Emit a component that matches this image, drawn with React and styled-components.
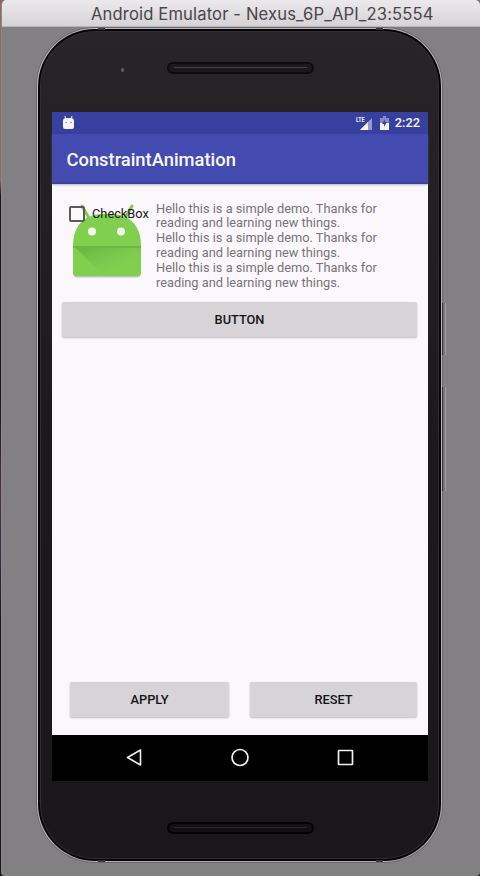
import React from "react";
import styled, { createGlobalStyle } from "styled-components";

const GlobalStyle = createGlobalStyle`
  * { box-sizing: border-box; }
  body { margin: 0; background: #29272b; overflow: hidden; }
`;

const Desktop = styled.div`
  width: 480px;
  height: 876px;
  padding-left: 1px;
  background: linear-gradient(#8f6764 0 180px, #171719 195px 400px, #49313a 490px, #303246 550px, #17171a 620px);
  font-family: Roboto, sans-serif;
`;

const EmulatorWindow = styled.main`
  height: 876px;
  display: flex;
  flex-direction: column;
  border-left: 1px solid #8b898b;
  border-radius: 5px 5px 4px 4px;
  background: #828082;
  overflow: hidden;
`;

const TitleBar = styled.header`
  height: 27px;
  flex: none;
  padding-left: 89px;
  background: linear-gradient(#ebe9eb, #d5d3d5);
  border-bottom: 1px solid #b7b5b7;
  color: #484648;
  font: 400 16.6px/28px Inter, sans-serif;
  letter-spacing: 0.14px;
  white-space: nowrap;
`;

const Phone = styled.section`
  position: relative;
  width: 405px;
  height: 834px;
  margin: 1px 0 0 35px;
  padding: 0 12px 0 14px;
  display: flex;
  flex-direction: column;
  flex: none;
  border: 1px solid;
  border-color: #b5b3b5 #b5b3b5 #aaa8aa #bfbdbf;
  border-radius: 58px;
  background: linear-gradient(#272528, #1c1a1d 45%, #19171a);
  box-shadow: inset 0 0 0 2px #050505, inset 0 0 0 3px #302e32, 0 0 0 1px #6b696b;
`;

const Bezel = styled.div`
  height: ${(p) => p.$height}px;
  flex: none;
  display: flex;
  justify-content: center;
  align-items: flex-start;
  padding-top: ${(p) => p.$top}px;
`;

const Speaker = styled.div`
  width: 147px;
  height: 12px;
  padding: 3px 5px;
  border: 2px solid ${(p) => (p.$dark ? "#020202" : "#0c0b0d")};
  border-radius: 6px;
  background: ${(p) => (p.$dark ? "#111012" : "#1b191c")};
  &::before {
    content: "";
    display: block;
    height: 1px;
    background: ${(p) => (p.$dark ? "#29272b" : "#454346")};
  }
`;

const Camera = styled.span`
  position: absolute;
  left: 83px;
  top: 39px;
  width: 3px;
  height: 4px;
  border-radius: 50%;
  background: #5e6267;
`;

const SideKey = styled.span`
  position: absolute;
  right: -5px;
  top: ${(p) => p.$top}px;
  width: 4px;
  height: ${(p) => p.$height}px;
  border-left: 1px solid #3b393c;
  border-right: 1px solid #a3a1a3;
  background: #777577;
`;

const BandMark = styled.span`
  position: absolute;
  left: ${(p) => p.$left}px;
  ${(p) => (p.$bottom ? "bottom: -1px;" : "top: -1px;")}
  width: 7px;
  height: 2px;
  background: #39373a;
`;

const Screen = styled.div`
  width: 376px;
  height: 669px;
  flex: none;
  display: flex;
  flex-direction: column;
  background: #fbf8fc;
`;

const StatusBar = styled.div`
  height: 22px;
  padding: 0 8px 0 10px;
  display: flex;
  align-items: center;
  background: #373f9f;
  color: #f4f5ff;
`;

const StatusIcons = styled.div`
  margin-left: auto;
  display: flex;
  align-items: center;
  gap: 7px;
`;

const Clock = styled.time`
  font: 500 12.8px/22px Roboto, sans-serif;
  margin-left: -1px;
`;

const AppBar = styled.div`
  height: 50px;
  padding: 0 14.5px;
  flex: none;
  position: relative;
  background: #434bb1;
  box-shadow: inset 0 -2px #3a42a2, 0 1px 2px #77738a88;
  color: #f9f8ff;
  font: 500 18.35px/51px Roboto, sans-serif;
`;

const Content = styled.div`
  flex: 1;
  padding: 17px 11px 18px 10px;
  display: flex;
  flex-direction: column;
`;

const Demo = styled.div`
  display: flex;
  height: 101px;
`;

const Avatar = styled.div`
  position: relative;
  width: 94px;
  flex: none;
  padding: 4px 0 0 10px;
`;

const CheckOverlay = styled.label`
  position: absolute;
  left: 7px;
  top: 4px;
  display: flex;
  align-items: center;
  gap: 7px;
  color: #171518;
  font: 400 12.8px/18px Roboto, sans-serif;
`;

const Box = styled.span`
  width: 16px;
  height: 16px;
  border: 2px solid #5c595d;
  border-radius: 2px;
`;

const Copy = styled.p`
  margin: 0;
  padding-top: 0.6px;
  color: #777478;
  font: 400 12.8px/14.85px Roboto, sans-serif;
`;

const Button = styled.button`
  height: 35px;
  width: ${(p) => p.$width}px;
  flex: none;
  padding: 0;
  border: 0;
  border-radius: 2px;
  background: #d6d4d6;
  box-shadow: 0 1px 2px #6f6d7070;
  color: #171518;
  font: 500 12.8px/35px Roboto, sans-serif;
`;

const Actions = styled.div`
  margin-top: auto;
  padding-left: 8px;
  display: flex;
  justify-content: space-between;
`;

const NavBar = styled.nav`
  height: 46px;
  padding: 0 72px;
  flex: none;
  display: flex;
  align-items: center;
  justify-content: space-between;
  background: #000;
`;

const Icon = styled.svg`
  display: block;
  flex: none;
  overflow: visible;
`;

const SignalLabel = styled.text`
  font: 700 7.5px Roboto, sans-serif;
  fill: #eeefff;
`;

function NotificationBot() {
  return (
    <Icon width="13" height="14" viewBox="0 0 13 14">
      <path d="M3 0l1 4M10 0L9 4" stroke="#f4f5ff" />
      <path d="M1 5q0-3 3-3h5q3 0 3 3v6q0 2-2 2H3q-2 0-2-2z" fill="#f4f5ff" />
      <circle cx="4" cy="6.5" r=".8" fill="#7b80c0" />
      <circle cx="9" cy="6.5" r=".8" fill="#7b80c0" />
    </Icon>
  );
}

function Signal() {
  return (
    <Icon width="17" height="15" viewBox="0 0 17 15">
      <path d="M4 14L16 2v12z" fill="#9499d2" />
      <path d="M4 14l8-8v8z" fill="#f4f5ff" />
      <SignalLabel x="0" y="6" textLength="8.5" lengthAdjust="spacingAndGlyphs">LTE</SignalLabel>
    </Icon>
  );
}

function Battery() {
  return (
    <Icon width="9" height="14" viewBox="0 0 9 14">
      <path d="M3 0h3v2h3v12H0V2h3z" fill="#858bca" />
      <path d="M0 7h9v7H0z" fill="#f4f5ff" />
      <path d="M5 3L2 8h2v3l3-5H5z" fill="#3c449f" />
    </Icon>
  );
}

function LauncherBot() {
  return (
    <Icon width="70" height="72" viewBox="0 0 70 72">
      <defs>
        <linearGradient id="bot-shadow" x1="0" y1="0" x2="1" y2="1">
          <stop offset="0" stopColor="#5ea63c" stopOpacity=".7" />
          <stop offset=".65" stopColor="#6db748" stopOpacity="0" />
        </linearGradient>
      </defs>
      <path d="M1 40h68v28q0 4.5-4 4.5H5q-4 0-4-4.5z" fill="#898b86" opacity=".5" />
      <path d="M10 1l7 12M60 1l-7 12" stroke="#83c954" strokeWidth="3" strokeLinecap="round" />
      <path d="M1 41q0-28 26-32h16q26 4 26 32v26q0 4-4 4H5q-4 0-4-4z" fill="#80cf4f" />
      <path d="M4 43l28 28h33q4 0 4-4V43z" fill="url(#bot-shadow)" />
      <path d="M1 42h68" stroke="#66ae42" strokeWidth="1.3" />
      <circle cx="20" cy="26.5" r="4" fill="#f5faef" />
      <circle cx="49" cy="26.5" r="4" fill="#f5faef" />
    </Icon>
  );
}

export default function App() {
  return (
    <Desktop>
      <GlobalStyle />
      <EmulatorWindow>
        <TitleBar>Android Emulator - Nexus_6P_API_23:5554</TitleBar>
        <Phone>
          <BandMark $left={60} />
          <BandMark $left={338} />
          <BandMark $left={60} $bottom />
          <BandMark $left={338} $bottom />
          <Camera />
          <SideKey $top={274} $height={52} />
          <SideKey $top={358} $height={104} />
          <Bezel $height={83} $top={33}><Speaker /></Bezel>
          <Screen>
            <StatusBar>
              <NotificationBot />
              <StatusIcons><Signal /><Battery /><Clock>2:22</Clock></StatusIcons>
            </StatusBar>
            <AppBar>ConstraintAnimation</AppBar>
            <Content>
              <Demo>
                <Avatar>
                  <LauncherBot />
                  <CheckOverlay><Box />CheckBox</CheckOverlay>
                </Avatar>
                <Copy>
                  Hello this is a simple demo. Thanks for<br />reading and learning new things.<br />
                  Hello this is a simple demo. Thanks for<br />reading and learning new things.<br />
                  Hello this is a simple demo. Thanks for<br />reading and learning new things.
                </Copy>
              </Demo>
              <Button $width={355}>BUTTON</Button>
              <Actions>
                <Button $width={159}>APPLY</Button>
                <Button $width={167}>RESET</Button>
              </Actions>
            </Content>
            <NavBar>
              <Icon width="20" height="20" viewBox="0 0 20 20" fill="none" stroke="#f1eff1" strokeWidth="1.6" strokeLinejoin="round">
                <path d="M3.5 9.5L16.5 2v15z" />
              </Icon>
              <Icon width="20" height="20" viewBox="0 0 20 20" fill="none" stroke="#f1eff1" strokeWidth="1.7">
                <circle cx="10" cy="9.5" r="8" />
              </Icon>
              <Icon width="20" height="20" viewBox="0 0 20 20" fill="none" stroke="#f1eff1" strokeWidth="1.7">
                <rect x="2.5" y="2.5" width="14" height="14" rx=".5" />
              </Icon>
            </NavBar>
          </Screen>
          <Bezel $height={80} $top={41}><Speaker $dark /></Bezel>
        </Phone>
      </EmulatorWindow>
    </Desktop>
  );
}
